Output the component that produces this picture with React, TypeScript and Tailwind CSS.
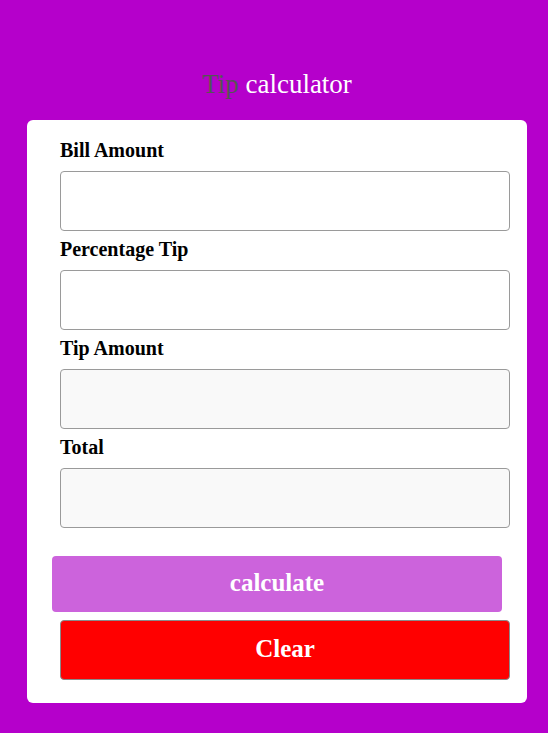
export default function App() {
  const fields = [
    { label: "Bill Amount", readOnly: false },
    { label: "Percentage Tip", readOnly: false },
    { label: "Tip Amount", readOnly: true },
    { label: "Total", readOnly: true },
  ];

  return (
    <div className="min-h-[733px] w-full bg-[#b500cb] pt-[66px] pb-[30px] font-['Liberation_Serif',serif]">
      <h1 className="ml-[27px] h-[36px] w-[500px] text-center text-[27px] leading-[36px] text-white">
        <span className="text-[#555555]">Tip</span> calculator
      </h1>

      {/* Card */}
      <div className="ml-[27px] mt-[18px] w-[500px] rounded-md bg-white pt-[12px] pb-[23px]">
        <div className="pl-[33px]">
          {fields.map((f) => (
            <div key={f.label}>
              <label className="flex h-[39px] items-center pb-[3px] text-[20px] font-bold text-black">
                {f.label}
              </label>
              <input
                type="text"
                readOnly={f.readOnly}
                className={`block h-[60px] w-[450px] rounded-[4px] border border-[#9a9a9a] outline-none ${
                  f.readOnly ? "bg-[#f9f9f9]" : "bg-white"
                }`}
              />
            </div>
          ))}
        </div>

        <div className="mt-[28px] pl-[25px]">
          <button className="block h-[56px] w-[450px] rounded-[4px] bg-[#cc63dc] pb-[2px] text-[25px] font-bold text-white">
            calculate
          </button>
        </div>
        <div className="mt-[8px] pl-[33px]">
          <button className="block h-[60px] w-[450px] rounded-[4px] border border-[#8a8a8a] bg-[#ff0000] pb-[2px] text-[25px] font-bold text-white">
            Clear
          </button>
        </div>
      </div>
    </div>
  );
}
